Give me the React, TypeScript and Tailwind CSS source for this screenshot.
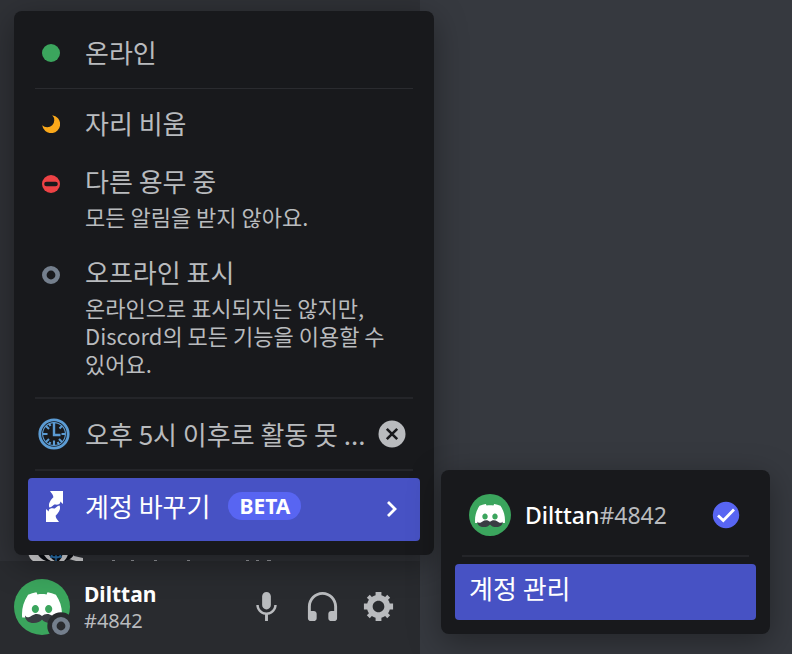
import type { ReactNode } from 'react'
import { SiDiscord } from 'react-icons/si'

interface StatusProps {
  icon: ReactNode
  label: string
  description?: string
}

function OnlineIcon() {
  return (
    <svg viewBox="0 0 18 18" className="size-[18px]" aria-hidden="true">
      <circle cx="9" cy="9" r="9" fill="#3ba55d" />
    </svg>
  )
}

function IdleIcon() {
  return (
    <svg viewBox="0 0 18 18" className="size-[18px]" aria-hidden="true">
      <path d="M10.2 0.2A9 9 0 1 1 0.2 10.2A6.6 6.6 0 0 0 10.2 0.2Z" fill="#faa81a" />
    </svg>
  )
}

function DndIcon() {
  return (
    <svg viewBox="0 0 18 18" className="size-[18px]" aria-hidden="true">
      <circle cx="9" cy="9" r="9" fill="#ed4245" />
      <rect x="2.2" y="6.7" width="13.6" height="4.6" rx="2.3" fill="#18191c" />
    </svg>
  )
}

function OfflineIcon() {
  return (
    <svg viewBox="0 0 18 18" className="size-[18px]" aria-hidden="true">
      <circle cx="9" cy="9" r="6.7" fill="none" stroke="#747f8d" strokeWidth="4.6" />
    </svg>
  )
}

function ClockIcon() {
  return (
    <svg viewBox="0 0 32 32" className="size-8" fill="none" stroke="#5b9bd3" aria-hidden="true">
      <circle cx="16" cy="16" r="14.2" strokeWidth="2.8" />
      <circle cx="16" cy="16" r="11.4" strokeWidth="1.1" />
      <path
        d="M16 22.5V27M5 16H9.5M23.5 16H27M8 8L11 11M24 8L21.5 10.5M8 24L11 21M24 24L21 21M11 5.5L12.5 8M21 26.5L19.6 24M11 26.5L12.4 24"
        strokeWidth="2.1"
      />
      <path d="M16 4V17H22.5" strokeWidth="2.4" />
    </svg>
  )
}

function SwapIcon() {
  const arrow = 'M4 0H17V13L14.3 10.6C14.6 13.6 11.6 14 9.2 13.6C7 13.4 6.2 16.4 3.4 16.6C2.4 13.4 3 10.6 7.4 6.2C7.2 3.4 5.6 2.6 4 0Z'
  return (
    <svg viewBox="0 0 17 31" className="h-[31px] w-[17px]" fill="#fff" aria-hidden="true">
      <path d={arrow} />
      <path d={arrow} transform="rotate(180 8.5 15.5)" />
    </svg>
  )
}

function Avatar({ id, className, status }: { id: string; className: string; status?: boolean }) {
  return (
    <svg viewBox="0 0 56 56" className={className} aria-hidden="true">
      <clipPath id={id}>
        <rect width="56" height="38.5" />
      </clipPath>
      <circle cx="28" cy="28" r="28" fill="#3ba55d" />
      <g clipPath={`url(#${id})`}>
        <SiDiscord x="8" y="8.5" size={40} color="#fff" />
      </g>
      <path
        d="M11 36.5C13 39.5 15.5 38.5 18 36.5C21 34.3 25.5 34.3 28 37C30.5 34.3 35 34.3 38 36.5C40.5 38.5 43 39.5 45 36.5C45 41.5 41 44 36.5 44C32.5 44 29.5 42.5 28 40.5C26.5 42.5 23.5 44 19.5 44C15 44 11 41.5 11 36.5Z"
        fill="#3a3c43"
      />
      {status && (
        <>
          <circle cx="47" cy="47" r="13.7" fill="#292b2f" />
          <circle cx="47" cy="47" r="6.7" fill="none" stroke="#747f8d" strokeWidth="4.6" />
        </>
      )}
    </svg>
  )
}

function StatusItem({ icon, label, description }: StatusProps) {
  return (
    <button className="flex w-full gap-[18px] rounded pt-2.5 pb-3 pr-3 pl-[7px] text-left text-[#b9bbbe]">
      <span className={`flex w-8 shrink-0 items-center justify-center ${description ? 'h-[38px]' : 'h-[34px]'}`}>{icon}</span>
      <span className="flex flex-col gap-[5px] break-keep">
        <span className="text-[26px] leading-8">{label}</span>
        {description && <span className="text-[22px] leading-7">{description}</span>}
      </span>
    </button>
  )
}

function StatusMenu() {
  return (
    <div className="absolute bottom-[99px] left-3.5 z-10 w-[420px] rounded-lg bg-[#18191c] px-3.5 pt-[15px] pb-3.5 shadow-[0_8px_32px_rgba(0,0,0,0.35)]">
      <StatusItem icon={<OnlineIcon />} label="온라인" />
      <hr className="mx-[7px] mt-1.5 mb-2 border-[#2a2b2f]" />
      <div className="flex flex-col">
        <StatusItem icon={<IdleIcon />} label="자리 비움" />
        <div className="mt-0.5 flex flex-col gap-1">
          <StatusItem icon={<DndIcon />} label="다른 용무 중" description="모든 알림을 받지 않아요." />
          <StatusItem
            icon={<OfflineIcon />}
            label="오프라인 표시"
            description="온라인으로 표시되지는 않지만, Discord의 모든 기능을 이용할 수 있어요."
          />
        </div>
      </div>
      <hr className="mx-[7px] my-2 border-t-2 border-[#242529]" />
      <div className="flex items-center py-[11px] pr-3.5 pl-2.5 text-[#b9bbbe]">
        <button className="flex flex-1 items-center gap-[15px] text-left">
          <ClockIcon />
          <span className="text-[26px] leading-8 whitespace-nowrap">오후 5시 이후로 활동 못 ...</span>
        </button>
        <button aria-label="상태 지우기" className="shrink-0">
          <svg viewBox="0 0 28 28" className="size-7" aria-hidden="true">
            <circle cx="14" cy="14" r="13.5" fill="#b9bbbe" />
            <path d="M8.8 8.8L19.2 19.2M19.2 8.8L8.8 19.2" stroke="#18191c" strokeWidth="2.6" />
          </svg>
        </button>
      </div>
      <hr className="mx-[7px] mt-2 mb-[7px] border-t-2 border-[#242529]" />
      <button className="flex w-full items-center rounded bg-[#4752c4] pt-3 pr-4 pb-[19px] pl-2.5 text-left text-white">
        <span className="mr-[15px] flex h-8 w-8 items-center justify-center"><SwapIcon /></span>
        <span className="text-[26px] leading-8">계정 바꾸기</span>
        <span className="ml-[18px] rounded-full bg-[#5865f2] px-[11px] font-['Noto_Sans',sans-serif] text-[21px] leading-7 font-bold">
          BETA
        </span>
        <svg viewBox="0 0 24 24" className="ml-auto size-6" fill="none" stroke="currentColor" strokeWidth="2.8" aria-hidden="true">
          <path d="M8 8L15 15L8 22" />
        </svg>
      </button>
    </div>
  )
}

function AccountMenu() {
  return (
    <div className="absolute bottom-5 left-[441px] z-10 w-[329px] rounded-lg bg-[#18191c] p-3.5 shadow-[0_8px_32px_rgba(0,0,0,0.35)]">
      <button className="flex h-[63px] w-full items-center pr-4 pb-px pl-3.5 text-left">
        <Avatar id="menu-avatar" className="size-[42px]" />
        <span className="ml-3.5 font-['Noto_Sans',sans-serif] text-[23px] leading-8 font-medium text-white">
          Dilttan<span className="font-normal text-[#b9bbbe]">#4842</span>
        </span>
        <svg viewBox="0 0 28 28" className="ml-auto size-7" aria-hidden="true">
          <circle cx="14" cy="14" r="13.2" fill="#5865f2" />
          <path d="M6 14.5L11.3 19.5L22 8.5" fill="none" stroke="#fff" strokeWidth="2.8" />
        </svg>
      </button>
      <hr className="mx-[7px] mt-2 mb-[7px] border-t-2 border-[#242529]" />
      <button className="w-full rounded bg-[#4752c4] px-3.5 pt-2 pb-4 text-left text-[26px] leading-8 text-white">
        계정 관리
      </button>
    </div>
  )
}

// Only the lower edge of this row shows between the menu and the user panel
function HiddenRow() {
  return (
    <svg viewBox="0 0 420 8" className="h-2 w-full" aria-hidden="true">
      <path d="M28 0H74V3L83 5V8H76L69 6L66 8H33Q29 5 28 0Z" fill="#d9d9db" />
      <path d="M37 0H75Q72 6 66 8H46Q40 6 37 0Z" fill="#0b0d12" />
      <path d="M43 0H48Q50 5 55 8H51Q45 5 43 0ZM68 0H63Q62 5 59 8H64Q68 4 68 0Z" fill="#d9d9db" />
      <path d="M51 2Q56 8 61 2M50 4H62M56 2V8" fill="none" stroke="#2b78b8" strokeWidth="1.3" />
      <path d="M112 7.5H115M131 7.5H134M154 7.5H157M187 7.5H190M246 7.5H249M256 7.5H259M267 7.5H271" stroke="#96989d" />
    </svg>
  )
}

function UserPanel() {
  return (
    <div className="flex h-[93px] items-center bg-[#292b2f] px-3.5 pb-0.5">
      <button className="flex items-center gap-3.5 text-left font-['Noto_Sans',sans-serif]">
        <Avatar id="user-avatar" className="size-14" status />
        <span className="flex flex-col">
          <span className="text-[21px] leading-7 font-bold text-white">Dilttan</span>
          <span className="text-[20px] leading-[26px] text-[#b9bbbe]">#4842</span>
        </span>
      </button>
      <div className="ml-auto flex text-[#b9bbbe]">
        <button aria-label="마이크" className="flex size-14 items-center justify-center">
          <svg viewBox="0 0 24 24" className="size-[35px]" fill="currentColor" aria-hidden="true">
            <path d="M15 11C15 12.66 13.66 14 12 14C10.34 14 9 12.66 9 11V5C9 3.34 10.34 2 12 2C13.66 2 15 3.34 15 5ZM12 16.1C14.76 16.1 17.3 14 17.3 11H19C19 14.42 16.28 17.24 13 17.72V22H11V17.72C7.72 17.23 5 14.41 5 11H6.7C6.7 14 9.24 16.1 12 16.1Z" />
          </svg>
        </button>
        <button aria-label="헤드셋" className="flex size-14 items-center justify-center">
          <svg viewBox="0 0 24 24" className="size-[35px]" fill="currentColor" aria-hidden="true">
            <path d="M12 2C6.486 2 2 6.485 2 12V20C2 21.104 2.895 22 4 22H6C7.104 22 8 21.104 8 20V17C8 15.896 7.104 15 6 15H4V12C4 7.588 7.589 4 12 4C16.411 4 20 7.588 20 12V15H18C16.896 15 16 15.896 16 17V20C16 21.104 16.896 22 18 22H20C21.104 22 22 21.104 22 20V12C22 6.485 17.514 2 12 2Z" />
          </svg>
        </button>
        <button aria-label="사용자 설정" className="flex size-14 items-center justify-center">
          <svg viewBox="0 0 24 24" className="size-[35px]" fill="currentColor" aria-hidden="true">
            <path
              fillRule="evenodd"
              d="M19.738 10H22V14H19.739C19.498 14.931 19.1 15.798 18.565 16.564L20 18L18 20L16.565 18.564C15.797 19.099 14.932 19.498 14 19.738V22H10V19.738C9.069 19.498 8.203 19.099 7.436 18.564L6 20L4 18L5.436 16.564C4.901 15.799 4.502 14.932 4.262 14H2V10H4.262C4.502 9.068 4.9 8.202 5.436 7.436L4 6L6 4L7.436 5.436C8.202 4.9 9.068 4.502 10 4.262V2H14V4.261C14.932 4.502 15.797 4.9 16.565 5.435L18 3.999L20 5.999L18.564 7.436C19.099 8.202 19.498 9.069 19.738 10ZM12 16C14.209 16 16 14.209 16 12C16 9.791 14.209 8 12 8C9.791 8 8 9.791 8 12C8 14.209 9.791 16 12 16Z"
            />
          </svg>
        </button>
      </div>
    </div>
  )
}

export default function App() {
  return (
    <div className="relative flex min-h-screen bg-[#36393f] font-['Noto_Sans_CJK_KR','Noto_Sans',sans-serif]">
      <aside className="flex w-[420px] shrink-0 flex-col justify-end bg-[#2f3136]">
        <HiddenRow />
        <UserPanel />
      </aside>
      <main className="flex-1" />
      <StatusMenu />
      <AccountMenu />
    </div>
  )
}
